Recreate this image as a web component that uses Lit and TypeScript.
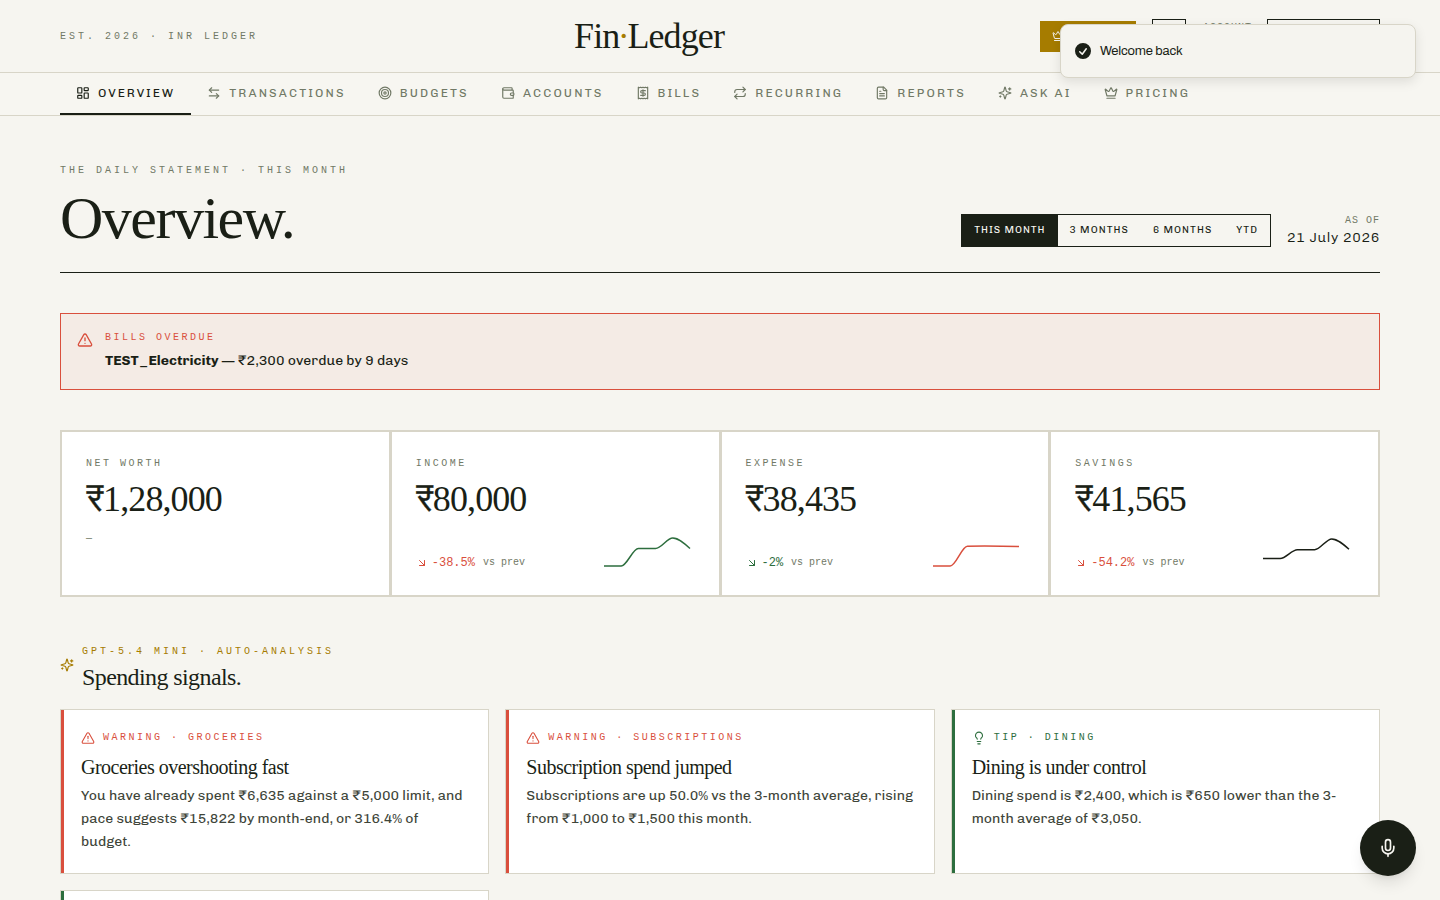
import { LitElement, html, css, svg } from "lit";
import { customElement } from "lit/decorators.js";

type Glyph = keyof typeof GLYPHS;

const GLYPHS = {
  dashboard: svg`<rect width="7" height="9" x="3" y="3" rx="1"/><rect width="7" height="5" x="14" y="3" rx="1"/><rect width="7" height="9" x="14" y="12" rx="1"/><rect width="7" height="5" x="3" y="16" rx="1"/>`,
  transfer: svg`<path d="M8 3 4 7l4 4"/><path d="M4 7h16"/><path d="m16 21 4-4-4-4"/><path d="M20 17H4"/>`,
  target: svg`<circle cx="12" cy="12" r="10"/><circle cx="12" cy="12" r="6"/><circle cx="12" cy="12" r="2"/>`,
  wallet: svg`<path d="M19 7V4a1 1 0 0 0-1-1H5a2 2 0 0 0 0 4h15a1 1 0 0 1 1 1v4h-3a2 2 0 0 0 0 4h3a1 1 0 0 0 1-1v-2a1 1 0 0 0-1-1"/><path d="M3 5v14a2 2 0 0 0 2 2h15a1 1 0 0 0 1-1v-4"/>`,
  receipt: svg`<path d="M4 2v20l2-1 2 1 2-1 2 1 2-1 2 1 2-1 2 1V2l-2 1-2-1-2 1-2-1-2 1-2-1-2 1Z"/><path d="M16 8h-6a2 2 0 1 0 0 4h4a2 2 0 1 1 0 4H8"/><path d="M12 17.5v-11"/>`,
  repeat: svg`<path d="m17 2 4 4-4 4"/><path d="M3 11v-1a4 4 0 0 1 4-4h14"/><path d="m7 22-4-4 4-4"/><path d="M21 13v1a4 4 0 0 1-4 4H3"/>`,
  file: svg`<path d="M15 2H6a2 2 0 0 0-2 2v16a2 2 0 0 0 2 2h12a2 2 0 0 0 2-2V7Z"/><path d="M14 2v4a2 2 0 0 0 2 2h4"/><path d="M10 9H8"/><path d="M16 13H8"/><path d="M16 17H8"/>`,
  sparkles: svg`<path d="M9.937 15.5A2 2 0 0 0 8.5 14.063l-6.135-1.582a.5.5 0 0 1 0-.962L8.5 9.936A2 2 0 0 0 9.937 8.5l1.582-6.135a.5.5 0 0 1 .963 0L14.063 8.5A2 2 0 0 0 15.5 9.937l6.135 1.581a.5.5 0 0 1 0 .964L15.5 14.063a2 2 0 0 0-1.437 1.437l-1.582 6.135a.5.5 0 0 1-.963 0z"/><path d="M20 3v4"/><path d="M22 5h-4"/><path d="M4 17v2"/><path d="M5 18H3"/>`,
  crown: svg`<path d="M11.562 3.266a.5.5 0 0 1 .876 0L15.39 8.87a1 1 0 0 0 1.516.294L21.183 5.5a.5.5 0 0 1 .798.519l-2.834 10.246a1 1 0 0 1-.956.734H5.81a1 1 0 0 1-.957-.734L2.02 6.02a.5.5 0 0 1 .798-.519l4.276 3.664a1 1 0 0 0 1.516-.294z"/><path d="M5 21h14"/>`,
  alert: svg`<path d="m21.73 18-8-14a2 2 0 0 0-3.48 0l-8 14A2 2 0 0 0 4 21h16a2 2 0 0 0 1.73-3"/><path d="M12 9v4"/><path d="M12 17h.01"/>`,
  bulb: svg`<path d="M15 14c.2-1 .7-1.7 1.5-2.5 1-.9 1.5-2.2 1.5-3.5A6 6 0 0 0 6 8c0 1 .2 2.2 1.5 3.5.7.7 1.3 1.5 1.5 2.5"/><path d="M9 18h6"/><path d="M10 22h4"/>`,
  down: svg`<path d="m7 7 10 10"/><path d="M17 7v10H7"/>`,
  mic: svg`<path d="M12 2a3 3 0 0 0-3 3v7a3 3 0 0 0 6 0V5a3 3 0 0 0-3-3Z"/><path d="M19 10v2a7 7 0 0 1-14 0v-2"/><path d="M12 19v3"/>`,
};

const icon = (name: Glyph, size: number, weight = 2) => html`<svg
  class="icon" width=${size} height=${size} viewBox="0 0 24 24" fill="none"
  stroke="currentColor" stroke-width=${weight} stroke-linecap="round" stroke-linejoin="round"
>${GLYPHS[name]}</svg>`;

/** Monotone cubic path through evenly spaced values. */
function curve(ys: number[], x0: number, step: number): string {
  const s = ys.slice(1).map((y, i) => (y - ys[i]) / step);
  const t = ys.map((_, i) => {
    if (i === 0 || i === ys.length - 1) return 0;
    const a = s[i - 1], b = s[i];
    if (a * b <= 0) return 0;
    return Math.sign(a) * Math.min(Math.abs(a), Math.abs(b), Math.abs(a + b) / 4) * 2;
  });
  t[0] = (3 * s[0] - t[1]) / 2;
  t[t.length - 1] = (3 * s[s.length - 1] - t[t.length - 2]) / 2;
  let d = `M${x0},${ys[0]}`;
  for (let i = 1; i < ys.length; i++) {
    const xa = x0 + (i - 1) * step, xb = xa + step, k = step / 3;
    d += `C${xa + k},${ys[i - 1] + k * t[i - 1]},${xb - k},${ys[i] - k * t[i]},${xb},${ys[i]}`;
  }
  return d;
}

const NAV: { label: string; glyph: Glyph }[] = [
  { label: "Overview", glyph: "dashboard" },
  { label: "Transactions", glyph: "transfer" },
  { label: "Budgets", glyph: "target" },
  { label: "Accounts", glyph: "wallet" },
  { label: "Bills", glyph: "receipt" },
  { label: "Recurring", glyph: "repeat" },
  { label: "Reports", glyph: "file" },
  { label: "Ask AI", glyph: "sparkles" },
  { label: "Pricing", glyph: "crown" },
];

const PERIODS = ["This month", "3 months", "6 months", "YTD"];

const STATS = [
  { label: "Net worth", amount: "1,28,000" },
  { label: "Income", amount: "80,000", delta: "-38.5%", tone: "red", line: "green", ys: [35, 35, 17.5, 17.5, 7, 17.5] },
  { label: "Expense", amount: "38,435", delta: "-2%", tone: "green", line: "red", ys: [35, 35, 15.3, 15, 15.2, 15.6] },
  { label: "Savings", amount: "41,565", delta: "-54.2%", tone: "red", line: "ink", ys: [27.4, 27.4, 18.7, 18.7, 7.9, 18.2] },
];

const SIGNALS: { kind: string; tone: string; glyph: Glyph; title: string; body: string }[] = [
  { kind: "Warning · Groceries", tone: "red", glyph: "alert", title: "Groceries overshooting fast", body: "You have already spent ₹6,635 against a ₹5,000 limit, and pace suggests ₹15,822 by month-end, or 316.4% of budget." },
  { kind: "Warning · Subscriptions", tone: "red", glyph: "alert", title: "Subscription spend jumped", body: "Subscriptions are up 50.0% vs the 3-month average, rising from ₹1,000 to ₹1,500 this month." },
  { kind: "Tip · Dining", tone: "green", glyph: "bulb", title: "Dining is under control", body: "Dining spend is ₹2,400, which is ₹650 lower than the 3-month average of ₹3,050." },
];

@customElement("app-root")
export class AppRoot extends LitElement {
  static styles = css`
    :host {
      --paper: #f6f5f0;
      --ink: #1a1f16;
      --soft: #3e4539;
      --muted: #717966;
      --line: #d8d5c8;
      --gold: #a67c00;
      --red: #d94f3d;
      --green: #2d6e3e;
      display: block;
      height: 900px;
      overflow: hidden;
      background: var(--paper);
      color: var(--ink);
      font: 400 14px/1.5 Chivo, "Liberation Sans", sans-serif;
    }
    * { box-sizing: border-box; margin: 0; }
    .icon { display: block; flex: none; }
    .mono { font: 400 10px/15px "Liberation Mono", monospace; text-transform: uppercase; color: var(--muted); }
    .wide { letter-spacing: 0.3em; }
    .mid { letter-spacing: 0.25em; }
    .slim { letter-spacing: 0.1em; }
    .serif { font-family: "Liberation Serif", serif; font-weight: 400; letter-spacing: -0.025em; }
    .red { color: var(--red); }
    .green { color: var(--green); }
    .gold { color: var(--gold); }
    .ink { color: var(--ink); }

    header { display: flex; align-items: center; justify-content: space-between; height: 73px; padding: 0 60px; border-bottom: 1px solid var(--line); }
    .logo { font-size: 36px; line-height: 40px; }
    .logo .gold { margin: 0 -1.5px; }
    .tools { display: flex; align-items: center; gap: 16px; }
    .upgrade { display: flex; align-items: center; width: 96px; height: 31px; padding: 0 12px; background: var(--gold); color: var(--paper); }
    .square { width: 34px; height: 34px; border: 1px solid var(--ink); }
    .account { height: 32px; margin-right: -1px; padding-left: 1px; line-height: 16px; }
    .signout { width: 113px; height: 34px; border: 1px solid var(--ink); }

    nav { display: flex; height: 43px; padding: 0 60px; border-bottom: 1px solid var(--line); background: #f7f6f1; }
    .tab { display: flex; align-items: center; gap: 8px; padding: 0 16px; border-bottom: 2px solid transparent; font-size: 12px; letter-spacing: 2.14px; text-transform: uppercase; color: var(--muted); }
    .tab.on { letter-spacing: 1.93px; color: var(--ink); border-color: var(--ink); }

    main { padding: 46px 60px 0; }
    .lead { display: flex; align-items: flex-end; justify-content: space-between; height: 111px; padding-bottom: 24px; border-bottom: 1px solid var(--ink); }
    h1 { font-size: 60px; line-height: 60px; margin-top: 10px; }
    .when { display: flex; align-items: flex-end; gap: 16px; }
    .periods { display: flex; height: 33px; border: 1px solid var(--ink); margin-bottom: 1px; }
    .period { display: flex; align-items: center; padding: 0 12px; font-size: 10px; letter-spacing: 1.06px; text-transform: uppercase; }
    .period.on { letter-spacing: 0.99px; background: var(--ink); color: var(--paper); }
    .asof { text-align: right; }
    .date { font-size: 14px; line-height: 20px; font-weight: 300; letter-spacing: 0.65px; }

    .overdue { display: flex; gap: 12px; height: 77px; margin-top: 40px; padding: 16px; border: 1px solid var(--red); background: rgba(217, 79, 61, 0.06); }
    .overdue .icon { margin-top: 2px; }
    .overdue p { margin-top: 4px; line-height: 24px; }
    strong { font-weight: 700; }

    .stats { display: grid; grid-template-columns: repeat(4, 1fr); gap: 1px; height: 167px; margin-top: 40px; border: 1px solid var(--line); background: var(--line); }
    .stat { display: flex; flex-direction: column; padding: 24px; border: 1px solid var(--line); background: #fff; }
    .amount { height: 40px; margin-top: 8px; font-size: 36px; line-height: 40px; }
    .rupee { font-family: FreeSans, "Liberation Sans", sans-serif; line-height: 1; -webkit-text-stroke: 0.3px currentColor; }
    .none { margin-top: 12px; }
    .trend { display: flex; align-items: flex-end; justify-content: space-between; margin-top: auto; }
    .delta { display: flex; align-items: center; gap: 4px; font: 400 12px/16px "Liberation Mono", monospace; }
    .prev { margin-left: 4px; font-size: 10px; color: var(--muted); }
    .spark { display: block; }

    .signals { display: flex; gap: 8px; height: 65px; margin-top: 47px; }
    .signals .icon { margin-top: 14px; }
    h2 { margin-top: 4px; font-size: 24px; line-height: 28px; }
    .cards { display: grid; grid-template-columns: repeat(3, 1fr); gap: 16px; }
    .card { position: relative; height: 164.75px; padding: 20px; border: 1px solid var(--line); background: #fff; }
    .card::before { content: ""; position: absolute; inset: 0 auto 0 0; width: 3px; background: currentColor; }
    .kind { display: flex; align-items: center; gap: 8px; color: inherit; }
    h3 { margin-top: 8.5px; font-size: 20px; line-height: 27.5px; color: var(--ink); }
    .card p { margin-top: 4px; line-height: 22.75px; letter-spacing: -0.02px; color: var(--soft); }

    .toast { position: absolute; top: 24px; right: 24px; display: flex; align-items: center; gap: 9px; width: 356px; height: 54px; padding: 0 14px; border: 1px solid var(--line); border-radius: 8px; background: #f5f4ef; box-shadow: 0 4px 12px rgba(0, 0, 0, 0.1); font-family: Archivo, "Liberation Sans", sans-serif; font-size: 13px; letter-spacing: -0.17px; }
    .toast span { padding-top: 2px; }
    .mic { position: absolute; right: 24px; top: 820px; display: grid; place-items: center; width: 56px; height: 56px; border-radius: 50%; background: var(--ink); color: var(--paper); box-shadow: 0 10px 15px -3px rgba(0, 0, 0, 0.1), 0 4px 6px -4px rgba(0, 0, 0, 0.1); }
  `;

  render() {
    return html`
      <header>
        <div class="mono wide">Est. 2026 · INR Ledger</div>
        <div class="logo serif">Fin<span class="gold">·</span>Ledger</div>
        <div class="tools">
          <div class="upgrade">${icon("crown", 12)}</div>
          <div class="square"></div>
          <div class="mono slim account">Account</div>
          <div class="signout"></div>
        </div>
      </header>
      <nav>
        ${NAV.map((n, i) => html`<a class="tab ${i === 0 ? "on" : ""}">${icon(n.glyph, 14)}<span>${n.label}</span></a>`)}
      </nav>
      <main>
        <section class="lead">
          <div>
            <div class="mono wide">The daily statement · This month</div>
            <h1 class="serif">Overview.</h1>
          </div>
          <div class="when">
            <div class="periods">
              ${PERIODS.map((p, i) => html`<span class="period ${i === 0 ? "on" : ""}">${p}</span>`)}
            </div>
            <div class="asof">
              <div class="mono slim">As of</div>
              <div class="date">21 July 2026</div>
            </div>
          </div>
        </section>

        <section class="overdue">
          <span class="red">${icon("alert", 16)}</span>
          <div>
            <div class="mono mid red">Bills overdue</div>
            <p><strong>TEST_Electricity</strong> — ₹2,300 overdue by 9 days</p>
          </div>
        </section>

        <section class="stats">
          ${STATS.map((s) => html`<div class="stat">
            <div class="mono mid">${s.label}</div>
            <div class="amount serif"><span class="rupee">₹</span>${s.amount}</div>
            ${s.ys
              ? html`<div class="trend">
                  <div class="delta ${s.tone}">${icon("down", 12)}<span>${s.delta}</span><span class="prev">vs prev</span></div>
                  <svg class="spark ${s.line}" width="96" height="40" fill="none" stroke="currentColor" stroke-width="1.5"><path d=${curve(s.ys, 5, 17.2)} /></svg>
                </div>`
              : html`<div class="mono none">—</div>`}
          </div>`)}
        </section>

        <section class="signals">
          <span class="gold">${icon("sparkles", 14)}</span>
          <div>
            <div class="mono wide gold">GPT-5.4 mini · Auto-analysis</div>
            <h2 class="serif">Spending signals.</h2>
          </div>
        </section>
        <section class="cards">
          ${SIGNALS.map((s) => html`<article class="card ${s.tone}">
            <div class="mono mid kind">${icon(s.glyph, 14, 1.9)}<span>${s.kind}</span></div>
            <h3 class="serif">${s.title}</h3>
            <p>${s.body}</p>
          </article>`)}
          <article class="card green"></article>
        </section>
      </main>
      <div class="toast">
        <svg class="icon" width="16" height="16" viewBox="2 2 16 16" fill="currentColor"><path fill-rule="evenodd" clip-rule="evenodd" d="M10 18a8 8 0 100-16 8 8 0 000 16zm3.857-9.809a.75.75 0 00-1.214-.882l-3.483 4.79-1.88-1.88a.75.75 0 10-1.06 1.061l2.5 2.5a.75.75 0 001.137-.089l4-5.5z" /></svg>
        <span>Welcome back</span>
      </div>
      <div class="mic">${icon("mic", 20, 2)}</div>
    `;
  }
}
